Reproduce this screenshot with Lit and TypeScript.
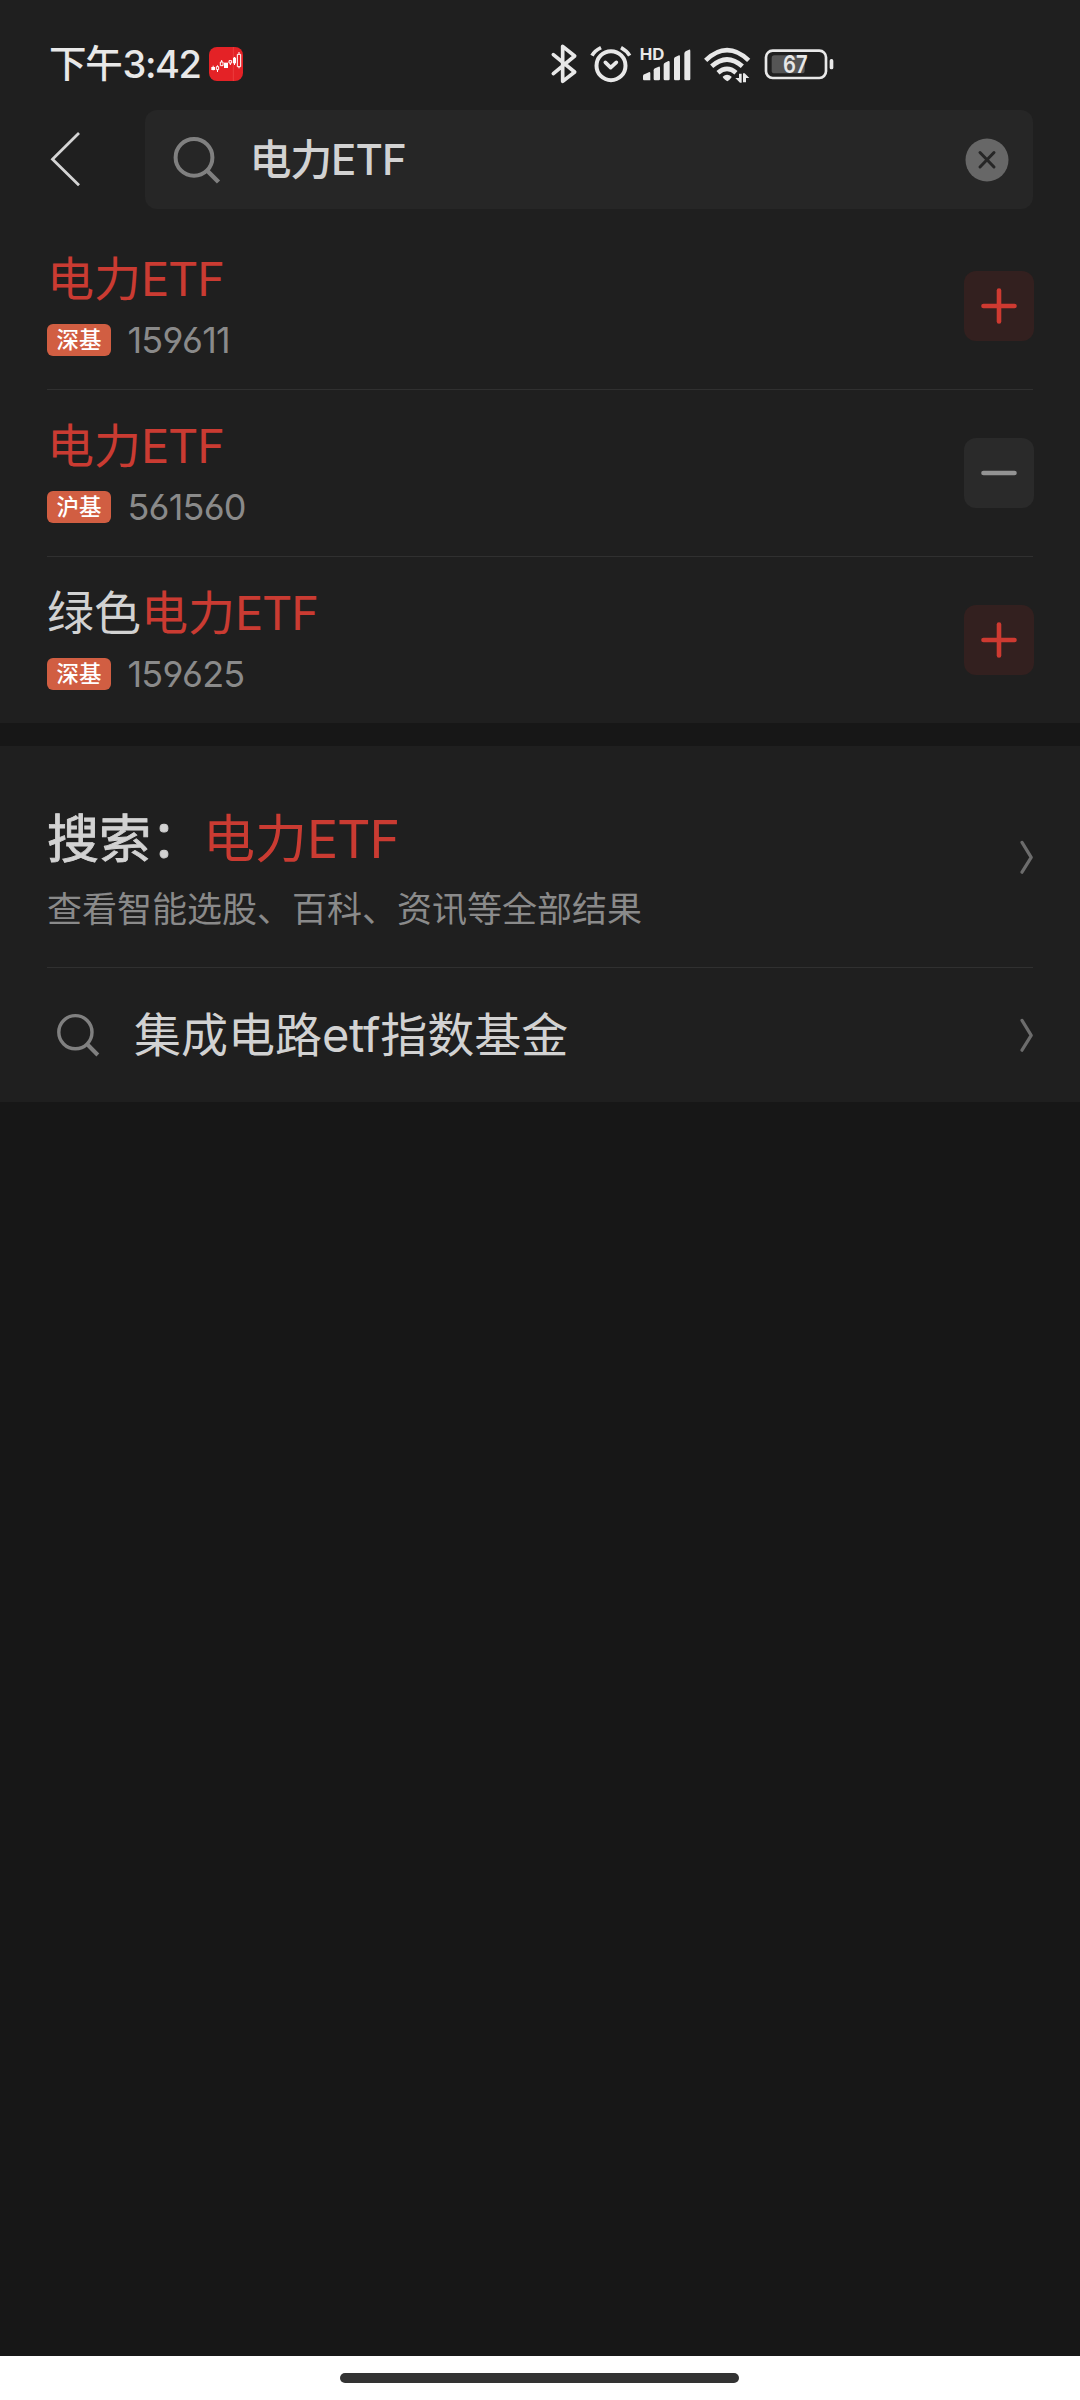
import { LitElement, html, svg, css, nothing } from "lit";
import { customElement, property } from "lit/decorators.js";

interface Fund {
  prefix: string;
  match: string;
  market: string;
  code: string;
  added: boolean;
}

const FUNDS: Fund[] = [
  { prefix: "", match: "电力ETF", market: "深基", code: "159611", added: false },
  { prefix: "", match: "电力ETF", market: "沪基", code: "561560", added: true },
  { prefix: "绿色", match: "电力ETF", market: "深基", code: "159625", added: false },
];

// Splits a label into Latin and CJK runs so that each can be tracked separately.
const runs = (text: string) =>
  (text.match(/[A-Za-z]+|[^A-Za-z]+/g) ?? []).map((part) =>
    /[A-Za-z]/.test(part) ? html`<span class="latin">${part}</span>` : html`<span>${part}</span>`
  );

const chevron = html`<svg class="chevron" width="14" height="36" viewBox="0 0 14 36">
  <path d="M3 3.4L12.2 18.4L3 33.2" fill="none" stroke="#6c6c6c" stroke-width="3.2" stroke-linecap="round" stroke-linejoin="round" />
</svg>`;

@customElement("status-bar")
export class StatusBar extends LitElement {
  static styles = css`
    :host {
      display: flex;
      align-items: center;
      height: 110px;
      padding: 18px 0 0 49px;
      box-sizing: border-box;
      color: #e8e8e8;
      font-family: Inter, "Noto Sans CJK SC", sans-serif;
    }
    .clock {
      display: flex;
      width: 160px;
      font-size: 38px;
      line-height: 50px;
      font-weight: 500;
    }
    .half { letter-spacing: -1.2px; font-size: 37.5px; }
    .time { letter-spacing: -1.5px; margin-left: 1px; }
    .icons { display: flex; align-items: center; margin-left: 307px; }
    svg { display: block; }
    .mark { font: 700 49px Inter, sans-serif; }
    .level { font: 600 72px Inter, sans-serif; }
  `;

  render() {
    return html`
      <div class="clock"><span class="half">下午</span><span class="time">3:42</span></div>
      <svg width="34" height="34" viewBox="537 51 102 102">
        <rect x="537" y="51" width="102" height="102" rx="24" fill="#e42226" />
        <path d="M610 51V153" stroke="#ef4a4a" stroke-width="2" />
        <g fill="#fff">
          <rect x="544" y="111" width="11" height="9" /><rect x="548" y="107" width="3" height="14" />
          <rect x="582" y="98" width="12" height="16" />
          <rect x="609" y="83" width="9" height="17" /><rect x="612" y="81" width="3" height="24" />
        </g>
        <g fill="none" stroke="#fff" stroke-width="3">
          <path d="M559 110h7v9h-7zM562.5 106v4M562.5 119v7" />
          <path d="M571 96h8v11h-8zM575 90v6" />
          <path d="M597 92h8v7h-8zM601 99v6" />
          <path d="M622 73h10v37h-10zM627 66v7M627 110v5" />
        </g>
      </svg>
      <div class="icons">
        <svg width="28" height="42" viewBox="60 38 84 126">
          <path d="M70 73L134 125L98 153V48L134 77L70 130" fill="none" stroke="#e8e8e8" stroke-width="11" stroke-linejoin="round" stroke-linecap="round" />
        </svg>
        <svg width="44" height="42" viewBox="176 38 132 126" style="margin-left:10.7px">
          <g fill="none" stroke="#e8e8e8" stroke-width="11">
            <circle cx="242" cy="106" r="43.5" stroke-width="12" />
            <path d="M185 76Q192 62 212 52M272 52Q290 62 298 76" />
            <path d="M225 96L241 112L258 96" stroke-linejoin="round" stroke-linecap="round" />
          </g>
        </svg>
        <svg width="54" height="42" viewBox="328 38 162 126" style="margin-left:6.7px">
          <text class="mark" x="330" y="90" fill="#e8e8e8" textLength="74" lengthAdjust="spacingAndGlyphs">HD</text>
          <g fill="#e8e8e8">
            <path d="M340 136Q341 132 346 131L359 125Q362 125 362 129V150H343Q340 150 340 146z" />
            <path d="M372 120Q372 116 376 114L387 109Q391 108 391 113V146Q391 150 387 150H376Q372 150 372 146z" />
            <path d="M402 103Q402 99 406 97L416 92Q420 91 420 96V146Q420 150 416 150H406Q402 150 402 146z" />
            <path d="M433 86Q433 82 437 80L448 75Q451 74 451 79V146Q451 150 447 150H437Q433 150 433 146z" />
            <path d="M464 70Q464 66 468 63L478 58Q482 57 482 62V146Q482 150 478 150H468Q464 150 464 146z" />
          </g>
        </svg>
        <svg width="48" height="42" viewBox="518 38 144 126" style="margin-left:9.3px">
          <g fill="none" stroke="#e8e8e8" stroke-width="14">
            <path d="M526 90Q590 29 655 90" />
            <path d="M544 108Q590 67 636 108" />
            <path d="M563 127Q590 104 617 127" />
          </g>
          <path d="M577 139Q590 127 604 139Q604 143 591 153Q578 144 577 139z" fill="#e8e8e8" />
          <path d="M626 130h8v27h-5L615 143h11zM638 156V129h5L657 143h-10v13z" fill="#e8e8e8" />
        </svg>
        <svg width="72" height="42" viewBox="700 38 216 126" style="margin-left:12.7px">
          <rect x="726" y="75" width="99" height="54" rx="8" fill="#555" />
          <rect x="709" y="61" width="180" height="82" rx="20" fill="none" stroke="#e8e8e8" stroke-width="8" />
          <rect x="900" y="86" width="11" height="31" rx="5" fill="#e8e8e8" />
          <text class="level" x="760" y="129" fill="#e8e8e8" textLength="74" lengthAdjust="spacingAndGlyphs">67</text>
        </svg>
      </div>
    `;
  }
}

@customElement("search-header")
export class SearchHeader extends LitElement {
  @property() query = "";

  static styles = css`
    :host {
      display: flex;
      align-items: center;
      height: 112px;
      padding: 0 47px 13px 50px;
      box-sizing: border-box;
      font-family: Inter, "Noto Sans CJK SC", sans-serif;
    }
    svg { display: block; flex: none; }
    .box {
      display: flex;
      align-items: center;
      flex: 1;
      height: 99px;
      margin-left: 63px;
      padding: 0 24px 0 27px;
      box-sizing: border-box;
      border-radius: 12px;
      background: #262626;
    }
    .query {
      flex: 1;
      margin-left: 25.5px;
      color: #d2d2d2;
      font-size: 42px;
      line-height: 60px;
      font-weight: 500;
      letter-spacing: -1.2px;
    }
    .latin { letter-spacing: -0.9px; }
  `;

  render() {
    return html`
      <svg width="32" height="60" viewBox="0 0 32 60">
        <path d="M29 3L2.5 29.2L29 55.2" fill="none" stroke="#d4d4d4" stroke-width="2.8" />
      </svg>
      <div class="box">
        <svg width="52" height="52" viewBox="0 0 52 52">
          <circle cx="22" cy="23.4" r="18.4" fill="none" stroke="#808080" stroke-width="4" />
          <path d="M35 36.5L46.5 48" stroke="#808080" stroke-width="4.4" />
        </svg>
        <div class="query">${runs(this.query)}</div>
        <svg width="44" height="44" viewBox="0 0 44 44">
          <circle cx="22" cy="22" r="21.5" fill="#676767" />
          <path d="M15 14.5L29 29M29 14.5L15 29" stroke="#262626" stroke-width="3" stroke-linecap="round" />
        </svg>
      </div>
    `;
  }
}

@customElement("fund-row")
export class FundRow extends LitElement {
  @property({ attribute: false }) fund!: Fund;

  static styles = css`
    :host {
      display: flex;
      align-items: center;
      justify-content: space-between;
      height: 167px;
      margin: 0 47px;
      font-family: Inter, "Noto Sans CJK SC", sans-serif;
    }
    .text { padding-bottom: 5px; }
    .name {
      color: #d2d2d2;
      font-size: 47px;
      line-height: 64px;
      white-space: nowrap;
    }
    .hit { color: #ca3b32; }
    .latin { letter-spacing: -1.2px; }
    .info { display: flex; align-items: center; height: 40px; margin-top: 9px; }
    .tag {
      width: 64px;
      height: 32px;
      border-radius: 6px;
      background: #d15e42;
      color: #fff;
      font-size: 22.5px;
      line-height: 31px;
      font-weight: 500;
      text-align: center;
    }
    .code {
      margin-left: 16.5px;
      color: #8a8a8a;
      font-size: 36px;
      line-height: 40px;
      letter-spacing: -0.8px;
      font-feature-settings: "cv03", "cv04";
    }
    .toggle {
      display: flex;
      width: 70px;
      height: 70px;
      margin-right: -1px;
      border-radius: 12px;
      background: #33201f;
      color: #ce3a31;
    }
    .toggle.added { background: #2a2a2a; color: #939393; }
  `;

  render() {
    const f = this.fund;
    return html`
      <div class="text">
        <div class="name">${runs(f.prefix)}<span class="hit">${runs(f.match)}</span></div>
        <div class="info"><span class="tag">${f.market}</span><span class="code">${f.code}</span></div>
      </div>
      <div class="toggle ${f.added ? "added" : ""}">
        <svg width="70" height="70" viewBox="0 0 70 70" stroke="currentColor" stroke-width="4.6" stroke-linecap="round">
          <path d="M19.5 35H50.5" />
          ${f.added ? nothing : svg`<path d="M35 19.5V50.5" />`}
        </svg>
      </div>
    `;
  }
}

@customElement("app-root")
export class AppRoot extends LitElement {
  static styles = css`
    :host {
      display: flex;
      flex-direction: column;
      width: 1080px;
      height: 2400px;
      background: #171717;
      font-family: Inter, "Noto Sans CJK SC", sans-serif;
    }
    .panel { background: #1f1f1f; }
    .funds { height: 723px; }
    .line { height: 1px; margin: 0 47px -1px; background: #303030; }
    .more { height: 356px; margin-top: 23px; }
    .all {
      display: flex;
      align-items: center;
      justify-content: space-between;
      height: 221px;
      padding: 0 47px;
      box-sizing: border-box;
    }
    .all .text { padding-top: 26px; }
    .title {
      color: #d2d2d2;
      font-size: 52px;
      line-height: 70px;
      white-space: nowrap;
    }
    .lead { -webkit-text-stroke: 0.9px #d2d2d2; }
    .hit { color: #ca3b32; }
    .latin { letter-spacing: -1.2px; }
    .sub {
      margin-top: 8px;
      color: #8a8a8a;
      font-size: 35px;
      line-height: 52px;
      white-space: nowrap;
    }
    .suggest {
      display: flex;
      align-items: center;
      height: 135px;
      padding: 0 47px 0 54px;
    }
    .word {
      flex: 1;
      margin-left: 32px;
      padding-top: 1px;
      color: #d2d2d2;
      font-size: 47px;
      line-height: 64px;
    }
    .word .latin { letter-spacing: -0.3px; }
    .chevron { flex: none; }
    .home {
      display: flex;
      justify-content: center;
      height: 44px;
      margin-top: auto;
      padding: 17px 1px 0 0;
      box-sizing: border-box;
      background: #fff;
    }
    .pill { width: 399px; height: 10px; border-radius: 5px; background: #333; }
  `;

  render() {
    return html`
      <section class="panel funds">
        <status-bar></status-bar>
        <search-header query="电力ETF"></search-header>
        ${FUNDS.map((f, i) => html`${i ? html`<div class="line"></div>` : nothing}<fund-row .fund=${f}></fund-row>`)}
      </section>
      <section class="panel more">
        <div class="all">
          <div class="text">
            <div class="title"><span class="lead">搜索：</span><span class="hit">${runs("电力ETF")}</span></div>
            <div class="sub">查看智能选股、百科、资讯等全部结果</div>
          </div>
          ${chevron}
        </div>
        <div class="line"></div>
        <div class="suggest">
          <svg width="48" height="48" viewBox="0 0 48 48">
            <circle cx="21.4" cy="21.2" r="16.6" fill="none" stroke="#808080" stroke-width="3.4" />
            <path d="M33 33L43.8 44" stroke="#808080" stroke-width="4" />
          </svg>
          <div class="word">${runs("集成电路etf指数基金")}</div>
          ${chevron}
        </div>
      </section>
      <footer class="home"><div class="pill"></div></footer>
    `;
  }
}
